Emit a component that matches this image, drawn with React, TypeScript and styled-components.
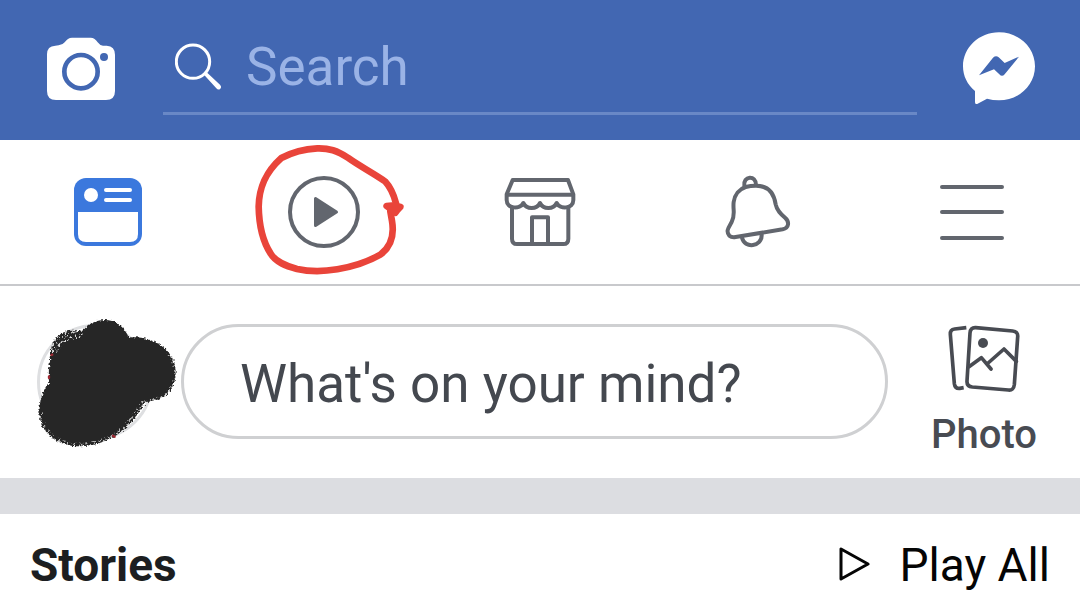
import React from "react";
import styled, { createGlobalStyle } from "styled-components";

const GlobalStyle = createGlobalStyle`
  *, *::before, *::after { box-sizing: border-box; }
  body {
    margin: 0;
    background: #fff;
    font-family: Roboto, "Liberation Sans", sans-serif;
  }
  button, input { font: inherit; }
  svg { display: block; flex: none; }
`;

const IconButton = styled.button`
  display: flex;
  align-items: center;
  justify-content: center;
  padding: 0;
  border: 0;
  background: none;
  color: inherit;
  cursor: pointer;
`;

const Header = styled.header`
  display: flex;
  align-items: center;
  gap: 46px;
  height: 140px;
  padding: 0 45px 4px;
  background: #4267b2;
  color: #fff;
`;

const HeaderButton = styled(IconButton)`
  flex: none;
  width: 72px;
  height: 72px;
`;

const SearchField = styled.label`
  display: flex;
  flex: 1;
  align-items: center;
  gap: 25px;
  min-width: 0;
  height: 94px;
  padding: 0 12px;
  border-bottom: 3px solid #6988c6;
`;

const SearchInput = styled.input`
  flex: 1;
  min-width: 0;
  height: 72px;
  padding: 0;
  border: 0;
  outline: 0;
  background: none;
  color: #fff;
  font-size: 53px;
  &::placeholder { color: #9ab3e6; opacity: 1; }
`;

const TabBar = styled.nav`
  display: grid;
  grid-template-columns: repeat(5, 1fr);
  height: 146px;
  border-bottom: 2px solid #c8c9cc;
`;

const Tab = styled(IconButton)<{ $active?: boolean }>`
  position: relative;
  color: ${(p) => (p.$active ? "#3b78dd" : "#62666e")};
`;

const Scribble = styled.svg`
  position: absolute;
  top: -5px;
  left: calc(50% - 84px);
  pointer-events: none;
`;

const Composer = styled.section`
  display: flex;
  align-items: flex-start;
  height: 192px;
  padding: 38px 44px 0 37px;
`;

const Avatar = styled.div`
  position: relative;
  flex: none;
  width: 116px;
  height: 116px;
  margin-right: 28px;
  border: 3px solid #dedfe1;
  border-radius: 50%;
`;

const Smudge = styled.svg`
  position: absolute;
  top: -22px;
  left: -15px;
`;

const StatusInput = styled.input`
  flex: 1;
  min-width: 0;
  height: 115px;
  margin-right: 44px;
  padding: 4px 56px 0;
  border: 3px solid #cfd0d2;
  border-radius: 58px;
  outline: 0;
  background: #fff;
  color: #44484f;
  font-size: 53px;
  &::placeholder { color: #44484f; opacity: 1; }
`;

const PhotoButton = styled(IconButton)`
  flex: none;
  flex-direction: column;
  gap: 16px;
  width: 104px;
  padding-top: 1px;
  color: #484b52;
  font-size: 40px;
  font-weight: 500;
  line-height: 48px;
`;

const Divider = styled.div`
  height: 36px;
  background: #dcdde1;
`;

const StoriesHeader = styled.section`
  display: flex;
  align-items: center;
  justify-content: space-between;
  height: 98px;
  padding: 4px 30px 0;
`;

const StoriesTitle = styled.h2`
  margin: 0;
  color: #1c1e21;
  font-size: 46px;
  font-weight: 700;
  line-height: 56px;
`;

const PlayAll = styled(IconButton)`
  gap: 30px;
  color: #050505;
  font-size: 46px;
  line-height: 56px;
`;

const CameraIcon = () => (
  <svg width="72" height="66" viewBox="45 45 216 198" aria-hidden="true">
    <path fill="#fff" d="M51 103Q51 78 76 77L86 76Q98 75 104 67Q113 53 126 53H182Q195 53 203 67Q209 76 219 77L230 77Q255 79 255 104V213Q255 240 228 240H78Q51 240 51 213Z" />
    <circle cx="153" cy="155" r="50" fill="none" stroke="#4267b2" strokeWidth="14" />
    <circle cx="222" cy="111" r="12" fill="#4267b2" />
  </svg>
);

const SearchIcon = () => (
  <svg width="46" height="48" viewBox="435 73 138 144" aria-hidden="true">
    <circle cx="489" cy="129" r="50" fill="none" stroke="#fff" strokeWidth="9" />
    <path fill="#fff" d="M522 168L530 161L570 198Q576 205 571 210Q565 216 559 209Z" />
  </svg>
);

const MessengerIcon = () => (
  <svg width="72" height="72" viewBox="69 35 216 216" aria-hidden="true">
    <path fill="#fff" d="M177 36C237 36 285 82 285 138C285 195 237 240 177 240Q158 240 141 235L113 250Q105 254 105 245V212C82 193 69 167 69 138C69 82 117 36 177 36Z" />
    <path fill="#4267b2" d="M117 165L159 112Q168 104 176 111L194 128L237 109L194 162Q186 171 178 162L162 147Z" />
  </svg>
);

const FeedIcon = () => (
  <svg width="68" height="68" viewBox="0 0 68 68" aria-hidden="true">
    <rect width="68" height="68" rx="12" fill="currentColor" />
    <path fill="#fff" d="M4 34H64V56Q64 64 56 64H12Q4 64 4 56Z" />
    <circle cx="17" cy="17" r="7" fill="#fff" />
    <path stroke="#fff" strokeWidth="4" strokeLinecap="round" d="M32 12H56M32 22H56" />
  </svg>
);

const WatchIcon = () => (
  <svg width="72" height="72" viewBox="0 0 72 72" aria-hidden="true">
    <circle cx="36" cy="36" r="34" fill="none" stroke="currentColor" strokeWidth="4" />
    <path fill="currentColor" stroke="currentColor" strokeWidth="3" strokeLinejoin="round" d="M27.500 22.500V49.500L48.500 36Z" />
  </svg>
);

const MarketIcon = () => (
  <svg width="72" height="72" viewBox="42 33 216 216" fill="none" stroke="currentColor" strokeWidth="12" strokeLinecap="round" strokeLinejoin="round" aria-hidden="true">
    <path d="M68 45H234L250 88V105C250 132 210 134 200 114C190 134 160 134 150 114C140 134 110 134 100 114C90 134 50 132 50 105V88Z" />
    <path d="M52 89H248M66 130V221Q66 237 81 237H220Q235 237 235 221V130M126 234V157H174V234" />
  </svg>
);

const BellIcon = () => (
  <svg width="72" height="76" viewBox="30 26 216 228" fill="none" stroke="currentColor" strokeWidth="12" strokeLinecap="round" strokeLinejoin="round" aria-hidden="true">
    <path d="M107 65C88 71 74 88 71 110C68 132 77 149 65 170C57 185 46 197 58 211Q65 217 77 215L218 192C238 188 238 169 226 158C212 146 201 136 197 117C192 84 174 61 138 61Q121 61 107 65Z" />
    <path d="M103 62C98 31 139 28 138 59M96 217C103 251 157 245 155 208" />
  </svg>
);

const MenuIcon = () => (
  <svg width="64" height="56" viewBox="0 0 64 56" aria-hidden="true">
    <path stroke="currentColor" strokeWidth="4" strokeLinecap="round" d="M2 3H62M2 28H62M2 54H62" />
  </svg>
);

const PhotoIcon = () => (
  <svg width="72" height="70" viewBox="84 45 216 210" fill="none" stroke="currentColor" strokeWidth="11" strokeLinecap="round" strokeLinejoin="round" aria-hidden="true">
    <path strokeLinecap="butt" d="M139 53L104 57Q90 59 91 73L103 221Q105 236 119 235L131 233" />
    <path d="M167 53L278 63Q295 65 293 81L283 224Q281 242 265 240L157 231Q140 229 141 213L150 69Q151 52 167 53Z" />
    <path d="M147 170L184 143L213 177M201 162L252 117L289 154" />
    <circle cx="189" cy="99" r="15" fill="currentColor" stroke="none" />
  </svg>
);

const PlayIcon = () => (
  <svg width="32" height="36" viewBox="0 0 32 36" fill="none" stroke="currentColor" strokeWidth="3" strokeLinejoin="round" aria-hidden="true">
    <path d="M3 2V32L30 17Z" />
  </svg>
);

export default function App() {
  return (
    <>
      <GlobalStyle />
      <Header>
        <HeaderButton type="button" aria-label="Camera">
          <CameraIcon />
        </HeaderButton>
        <SearchField>
          <SearchIcon />
          <SearchInput type="text" placeholder="Search" aria-label="Search" />
        </SearchField>
        <HeaderButton type="button" aria-label="Messenger">
          <MessengerIcon />
        </HeaderButton>
      </Header>

      <TabBar>
        <Tab type="button" $active aria-label="News Feed"><FeedIcon /></Tab>
        <Tab type="button" aria-label="Watch">
          <WatchIcon />
          <Scribble width="180" height="150" viewBox="0 0 540 450" fill="none" stroke="#e9443a" strokeWidth="20" strokeLinecap="round" strokeLinejoin="round" aria-hidden="true">
            <path d="M468 205C461 178 449 154 435 139C403 116 360 94 325 69C291 47 267 39 232 40C194 42 152 54 124 69C75 113 57 159 56 215C57 269 68 319 92 356C107 382 139 393 171 402C212 411 250 410 292 403C338 395 388 378 421 359C455 334 463 299 456 258L451 229" />
            <path d="M440 213Q461 209 481 216Q472 225 466 233Q456 224 440 213Z" fill="#e9443a" />
          </Scribble>
        </Tab>
        <Tab type="button" aria-label="Marketplace"><MarketIcon /></Tab>
        <Tab type="button" aria-label="Notifications"><BellIcon /></Tab>
        <Tab type="button" aria-label="Menu"><MenuIcon /></Tab>
      </TabBar>

      <Composer>
        <Avatar>
          <Smudge width="170" height="155" viewBox="0 0 510 465" aria-hidden="true">
            <defs>
              <filter id="rough" x="-5%" y="-5%" width="110%" height="110%">
                <feTurbulence type="fractalNoise" baseFrequency="0.15" numOctaves="2" seed="4" />
                <feDisplacementMap in="SourceGraphic" scale="14" xChannelSelector="R" yChannelSelector="G" />
              </filter>
              <filter id="speckle" x="-10%" y="-10%" width="120%" height="120%">
                <feTurbulence type="fractalNoise" baseFrequency="0.16" numOctaves="2" seed="9" result="noise" />
                <feColorMatrix in="noise" type="matrix" values="0 0 0 0 0  0 0 0 0 0  0 0 0 0 0  9 0 0 0 -4.900" result="grain" />
                <feComposite in="SourceGraphic" in2="grain" operator="in" />
              </filter>
              <clipPath id="smudgeShape">
                <path d="M78 150C75 105 105 75 145 77C160 80 168 79 178 72C205 43 250 36 280 57C296 68 304 82 312 98C350 92 390 105 418 129C443 151 456 180 451 215C446 260 413 286 361 291C340 325 320 360 275 390C230 418 190 426 145 423C95 417 55 385 46 345C38 305 49 260 72 232C70 205 72 180 78 150Z" />
              </clipPath>
            </defs>
            <path fill="#262626" filter="url(#rough)" d="M78 150C75 105 105 75 145 77C160 80 168 79 178 72C205 43 250 36 280 57C296 68 304 82 312 98C350 92 390 105 418 129C443 151 456 180 451 215C446 260 413 286 361 291C340 325 320 360 275 390C230 418 190 426 145 423C95 417 55 385 46 345C38 305 49 260 72 232C70 205 72 180 78 150Z" />
            <g clipPath="url(#smudgeShape)">
              <g filter="url(#speckle)" fill="none" strokeLinecap="round">
                <path stroke="#d8d8d8" strokeWidth="36" d="M88 128C94 102 115 88 155 84" />
                <path stroke="#b4b4b4" strokeWidth="20" d="M46 330C50 385 95 417 145 423C190 426 230 418 275 390C310 366 335 330 355 296" />
                <path stroke="#b4b4b4" strokeWidth="14" d="M365 291C413 286 446 260 451 215C454 190 448 165 430 142" />
              </g>
            </g>
            <path stroke="#9c2730" strokeWidth="7" strokeLinecap="round" d="M79 150L82 149M264 392L269 395M72 214L72 219" />
          </Smudge>
        </Avatar>
        <StatusInput type="text" placeholder="What's on your mind?" aria-label="What's on your mind?" />
        <PhotoButton type="button">
          <PhotoIcon />
          <span>Photo</span>
        </PhotoButton>
      </Composer>

      <Divider />

      <StoriesHeader>
        <StoriesTitle>Stories</StoriesTitle>
        <PlayAll type="button">
          <PlayIcon />
          <span>Play All</span>
        </PlayAll>
      </StoriesHeader>
    </>
  );
}
